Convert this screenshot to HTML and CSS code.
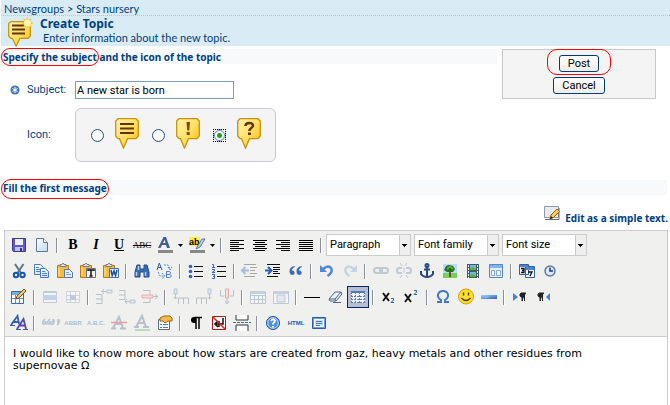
FILE: index.html
```html
<!DOCTYPE html>
<html lang="en">
<head>
<meta charset="utf-8">
<title>Create Topic</title>
<link rel="stylesheet" href="styles.css">
</head>
<body>
<svg class="defs" aria-hidden="true">
  <defs>
    <linearGradient id="gold" x1="0" y1="0" x2="1" y2="1"><stop offset="0" stop-color="#fff3b8"/><stop offset=".5" stop-color="#ffe066"/><stop offset="1" stop-color="#f9b90c"/></linearGradient>
    <linearGradient id="blue" x1="0" y1="0" x2="1" y2="1"><stop offset="0" stop-color="#a9d0f8"/><stop offset="1" stop-color="#2c5fc4"/></linearGradient>
    <linearGradient id="paper" x1="0" y1="0" x2="1" y2="1"><stop offset="0" stop-color="#fff"/><stop offset="1" stop-color="#c4d8f2"/></linearGradient>
    <symbol id="bubble" viewBox="0 0 24 31" preserveAspectRatio="none"><path d="M3 .7h18l2.300 2.300v15l-2.300 2.700h-8.500l-4 9.300-4-9.300H3L.7 18V3z" fill="url(#gold)" stroke="#c89208" stroke-width="1.300"/></symbol>
    <symbol id="clip" viewBox="0 0 20 20"><path d="M2.500 4.500h11v12h-11z" fill="#f5bd45" stroke="#bd7918"/><path d="M5 5.500V3.500h2l1-1.500 1 1.500h2v2z" fill="#e9e9f0" stroke="#79798b"/><path d="M4 7v8" stroke="#ffe49b"/></symbol>
  </defs>
</svg>

<header class="header">
  <nav class="crumbs"><a href="#">Newsgroups</a> &gt; <a href="#">Stars nursery</a></nav>
  <div class="heading">
    <svg class="topic-icon" viewBox="0 0 27 31"><use href="#bubble" x="1" y="5" width="23" height="26"/><path d="M5 9.500h13M5 13.500h13M5 17.500h13" stroke="#633600" stroke-width="2"/><path d="M20.500 1l1.300 2.500 3-1-1 3 2.700 1.500-2.700 1.500 1 3-3-1-1.300 2.500-1.300-2.500-3 1 1-3L14.500 7l2.700-1.500-1-3 3 1z" fill="#f0c64c"/><circle cx="20.500" cy="7" r="3.500" fill="#fff6b0"/></svg>
    <div><h1>Create Topic</h1><p>Enter information about the new topic.</p></div>
  </div>
</header>

<form class="page">
  <div class="top">
    <section class="details">
      <h2 class="band"><span class="mark">Specify the subject</span> and the icon of the topic</h2>
      <div class="field subject">
        <svg class="required" viewBox="0 0 10 10" aria-hidden="true"><circle cx="5" cy="5" r="4.600" fill="#4778b8"/><path d="M5 2v6M2.500 3.500l5 3M7.500 3.500l-5 3" stroke="#fff"/></svg>
        <label for="subject">Subject:</label>
        <input id="subject" type="text" value="A new star is born">
      </div>
      <div class="field">
        <span></span>
        <span id="icon-label">Icon:</span>
        <div class="choices" role="radiogroup" aria-labelledby="icon-label">
          <label><input type="radio" name="icon" aria-label="Message"><svg viewBox="0 0 24 31"><use href="#bubble" width="24" height="31"/><path d="M5 6h14M5 10.500h14M5 15h14" stroke="#633600" stroke-width="2"/></svg></label>
          <label><input type="radio" name="icon" aria-label="Important"><svg viewBox="0 0 24 31"><use href="#bubble" width="24" height="31"/><path d="M10.500 4h3.500l-.7 8.500h-2.100zM10.700 14h3v3h-3z" fill="#7d4e00"/></svg></label>
          <label><input type="radio" name="icon" aria-label="Question" checked><svg viewBox="0 0 24 31"><use href="#bubble" width="24" height="31"/><path d="M8.500 8c0-4 7.500-4 7.500-.5 0 2.500-3.700 2.500-3.700 5.500" fill="none" stroke="#633600" stroke-width="2.500"/><path d="M11 14.500h3v2.500h-3z" fill="#633600"/></svg></label>
        </div>
      </div>
    </section>
    <div class="actions">
      <span class="mark mark-button"><button type="button" class="push">Post</button></span>
      <button type="button" class="push">Cancel</button>
    </div>
  </div>

  <h2 class="band"><span class="mark mark-tall">Fill the first message</span></h2>

  <div class="switch"><a href="#"><svg viewBox="0 0 16 16"><path d="M.5 1.500h14v11H.5z" fill="#e5ebf1" stroke="#8c99a8"/><path d="M1 14.500h14V3" fill="none" stroke="#606b78"/><path d="M6 14l1-4 6-6 2.500 2.500-6 6z" fill="#ffcb4d" stroke="#956113"/><path d="M6 14l1-3 2 2z" fill="#222"/></svg>Edit as a simple text.</a></div>

  <div class="editor">
    <div class="tools" role="toolbar">
      <div class="row">
        <button type="button" aria-label="Save"><svg viewBox="0 0 20 20"><path d="M3.500 3.500h13v13h-12l-1-1z" fill="#605ac5" stroke="#3d398e"/><path d="M6 4h8v6H6z" fill="#eef0ff"/><path d="M6 12h8v4H6z" fill="#bfc1ef"/><path d="M11 13h2v3h-2z" fill="#353181"/></svg></button>
        <button type="button" aria-label="New document"><svg viewBox="0 0 20 20"><path d="M4.500 3.500h7l4 4v9h-11z" fill="url(#paper)" stroke="#5d7899"/><path d="M11.500 3.500v4h4" fill="#fff" stroke="#5d7899"/></svg></button>
        <i class="sep"></i>
        <button type="button" class="glyph"><b>B</b></button>
        <button type="button" class="glyph"><b><em>I</em></b></button>
        <button type="button" class="glyph"><b><u>U</u></b></button>
        <button type="button" class="glyph strike"><s>ABC</s></button>
        <button type="button" class="split" aria-label="Text colour"><svg viewBox="0 0 20 20"><path d="M3 13L8.500 2h2.500l4 11h-3l-1-3H7l-1.500 3zM8 8h2.600L9.700 4.800z" fill="#405d99"/><path d="M3 15h15v3H3z" fill="#888"/></svg><svg class="arrow" viewBox="0 0 5 3"><path d="M0 0h5L2.500 3z"/></svg></button>
        <button type="button" class="split" aria-label="Highlight"><svg viewBox="0 0 20 20"><path d="M2 2h11v9H2z" fill="#fff04d"/><text x="2" y="10" class="svg-ab">ab</text><path d="M10 12l5-8 3 0-5 8-4 2z" fill="#b9d2ee" stroke="#56769e"/><path d="M3 15h15v3H3z" fill="#888"/></svg><svg class="arrow" viewBox="0 0 5 3"><path d="M0 0h5L2.500 3z"/></svg></button>
        <i class="sep"></i>
        <button type="button" aria-label="Align left"><svg viewBox="0 0 20 20"><path d="M3 5.500h14M3 7.500h9M3 9.500h14M3 11.500h9M3 13.500h14M3 15.500h9" stroke="#000"/></svg></button>
        <button type="button" aria-label="Align centre"><svg viewBox="0 0 20 20"><path d="M3 5.500h14M5 7.500h10M3 9.500h14M5 11.500h10M3 13.500h14M5 15.500h10" stroke="#000"/></svg></button>
        <button type="button" aria-label="Align right"><svg viewBox="0 0 20 20"><path d="M3 5.500h14M8 7.500h9M3 9.500h14M8 11.500h9M3 13.500h14M8 15.500h9" stroke="#000"/></svg></button>
        <button type="button" aria-label="Justify"><svg viewBox="0 0 20 20"><path d="M3 5.500h14M3 7.500h14M3 9.500h14M3 11.500h14M3 13.500h14M3 15.500h14" stroke="#000"/></svg></button>
        <i class="sep"></i>
        <span class="pick"><select aria-label="Format"><option>Paragraph</option></select></span>
        <span class="pick"><select aria-label="Font family"><option>Font family</option></select></span>
        <span class="pick"><select aria-label="Font size"><option>Font size</option></select></span>
      </div>

      <div class="row">
        <button type="button" aria-label="Cut"><svg viewBox="0 0 20 20"><path d="M6 3l6 9M14.500 3l-6 9" stroke="#5e7590" stroke-width="2"/><circle cx="7" cy="14" r="2.200" fill="none" stroke="#1554b0" stroke-width="2"/><circle cx="13.500" cy="14" r="2.200" fill="none" stroke="#1554b0" stroke-width="2"/></svg></button>
        <button type="button" aria-label="Copy"><svg viewBox="0 0 20 20"><g fill="url(#paper)" stroke="#4e77b5"><path d="M2.500 3.500h6l3 3v7h-9z"/><path d="M8.500 7.500h5l3 3v6h-8z"/></g><path d="M4 6.500h3M4 8.500h4M4 10.500h4M10 10.500h3M10 12.500h5M10 14.500h5" stroke="#4e82ca"/></svg></button>
        <button type="button" aria-label="Paste"><svg viewBox="0 0 20 20"><use href="#clip" width="20" height="20"/><path d="M9.500 8.500h5l3 3v5h-8z" fill="#e2edff" stroke="#58779c"/><path d="M11 11.500h3M11 13.500h5" stroke="#7fa1cf"/></svg></button>
        <button type="button" aria-label="Paste text"><svg viewBox="0 0 20 20"><use href="#clip" width="20" height="20"/><path d="M8.500 7.500h9v9h-9z" fill="#f1f1f1" stroke="#65707e"/><path d="M10 10v-1h6v1M13 9v6M11.500 15h3" stroke="#111" stroke-width="1.500" fill="none"/></svg></button>
        <button type="button" aria-label="Paste from Word"><svg viewBox="0 0 20 20"><use href="#clip" width="20" height="20"/><path d="M8.500 7.500h9v9h-9z" fill="#e4efff" stroke="#4870b4"/><path d="M10 9l1.200 5.500L13 10l1.500 4.500L16 9" stroke="#174d9c" stroke-width="1.500" fill="none"/></svg></button>
        <i class="sep"></i>
        <button type="button" aria-label="Find"><svg viewBox="0 0 20 20"><path d="M5 4h3v4h4V4h3l2 7v5h-5v-5H8v5H3v-5z" fill="#396eb5" stroke="#234a86"/><path d="M4.500 11v4M13.500 11v4M6.500 5v4" stroke="#a9cdf3" stroke-width="1.500"/></svg></button>
        <button type="button" aria-label="Replace"><svg viewBox="0 0 20 20"><path d="M2 9l2.300-7L7 9M3 6.500h3" fill="none" stroke="#365895"/><path d="M11.500 10.500v6h3q2 0 1.500-2-.4-1-2-1h-2.500m0-3h2.500q2 0 1.500 2-.3 1-1.500 1" fill="none" stroke="#557fd0"/><path d="M9 4h4l2 4M3 11l2 4h4M13 6l2 3 2-3M7 12l3 3-3 3" fill="none" stroke="#4b8ae0" stroke-dasharray="2 1"/></svg></button>
        <i class="sep"></i>
        <button type="button" aria-label="Bullets"><svg viewBox="0 0 20 20"><path d="M8 5.500h9M8 10.500h9M8 15.500h9" stroke="#111"/><g fill="#2e63bb"><circle cx="4.500" cy="5.500" r="1.800"/><circle cx="4.500" cy="10.500" r="1.800"/><circle cx="4.500" cy="15.500" r="1.800"/></g></svg></button>
        <button type="button" aria-label="Numbers"><svg viewBox="0 0 20 20"><path d="M8 5.500h9M8 10.500h9M8 15.500h9" stroke="#111"/><path d="M3 3.500h1.500V6M3 6.500h3M3 8.500h2.500v1.500L3 11.500h3M3 13.500h2.500v4H3M4 15.500h2" fill="none" stroke="#2e63bb"/></svg></button>
        <i class="sep"></i>
        <button type="button" class="off" aria-label="Outdent"><svg viewBox="0 0 20 20"><path d="M4 3.500h12M10 6.500h7M10 9.500h5M10 12.500h7M4 15.500h11" stroke="#222"/><path d="M9 9.500H2M5.500 6L2 9.500 5.500 13" fill="none" stroke="#2460bd" stroke-width="2"/></svg></button>
        <button type="button" aria-label="Indent"><svg viewBox="0 0 20 20"><path d="M4 3.500h13M10 6.500h7M10 8.500h7M10 10.500h5M10 12.500h7M4 15.500h11" stroke="#111"/><path d="M2 9.500h6M5 6l3.500 3.500L5 13" fill="none" stroke="#2460bd" stroke-width="2"/></svg></button>
        <button type="button" aria-label="Quote"><svg viewBox="0 0 20 20"><path d="M8.500 5Q3 6 3.500 11q.5 3 3 3 2.500-.3 2.200-2.500Q8.200 9 6 9.500 6 7 9 6zM15.500 5q-5.500 1-5 6 .5 3 3 3 2.500-.3 2.200-2.500Q15.200 9 13 9.500 13 7 16 6z" fill="#3e6cb5"/></svg></button>
        <i class="sep"></i>
        <button type="button" aria-label="Undo"><svg viewBox="0 0 20 20"><path d="M3 4v7h7z" fill="#5686d8"/><path d="M6 8Q12 3 14.500 8q1 4-4 7" fill="none" stroke="#5686d8" stroke-width="2.500"/></svg></button>
        <button type="button" class="off" aria-label="Redo"><svg viewBox="0 0 20 20"><path d="M17 4v7h-7z" fill="#7fa0ca"/><path d="M14 8Q8 3 5.500 8q-1 4 4 7" fill="none" stroke="#7fa0ca" stroke-width="2.500"/></svg></button>
        <i class="sep"></i>
        <button type="button" class="off" aria-label="Link"><svg viewBox="0 0 20 20"><g fill="none" stroke="#6580a5" stroke-width="2"><rect x="3" y="7" width="8" height="5" rx="2.500"/><rect x="9" y="7" width="8" height="5" rx="2.500"/></g></svg></button>
        <button type="button" class="off" aria-label="Unlink"><svg viewBox="0 0 20 20"><g fill="none" stroke="#6580a5" stroke-width="2"><path d="M8 7H5q-2 0-2 2.500T5 12h3M12 7h3q2 0 2 2.500T15 12h-3"/><path d="M6 2l2 3M13 2l-2 3M6 17l2-3M14 17l-2-3M10 7v5" stroke-width="1"/></g></svg></button>
        <button type="button" aria-label="Anchor"><svg viewBox="0 0 20 20"><g fill="none" stroke="#274b80" stroke-width="2"><circle cx="10" cy="4.500" r="1.500"/><path d="M10 6v10M7 8.500h6M4 10v3q2 3 6 3t6-3v-3"/></g></svg></button>
        <button type="button" aria-label="Image"><svg viewBox="0 0 20 20"><path d="M3 3h14v9H3z" fill="#b7dcff"/><path d="M3 12h14v5H3z" fill="#77cf59"/><path d="M9 10h2v6H9z" fill="#75501a"/><path d="M4 9l2-4 3-1 4 1 2 3-2 3H7z" fill="#217222"/><path d="M7 8l3-2 3 2" stroke="#62b33b" stroke-width="2"/></svg></button>
        <button type="button" aria-label="Media"><svg viewBox="0 0 20 20"><path d="M4 3h12v14H4z" fill="#445c68"/><path d="M7 4h6v5H7zM7 11h6v5H7z" fill="#65bde7"/><path d="M7 7l3-1 3 2v1H7zM7 14l3-1 3 2v1H7z" fill="#5eae40"/><path d="M5.500 4v13M14.500 4v13" stroke="#eee" stroke-dasharray="2 1"/></svg></button>
        <button type="button" aria-label="Layer"><svg viewBox="0 0 20 20"><path d="M3.500 3.500h13v13h-13z" fill="#e2efff" stroke="#5586c5"/><path d="M4 4h12v3H4z" fill="#80b4f2"/><path d="M5.500 9.500h3v5h-3zM10.500 9.500h4v5h-4z" fill="#fff" stroke="#80a9d8"/></svg></button>
        <i class="sep"></i>
        <button type="button" aria-label="Date"><svg viewBox="0 0 20 20"><path d="M2.500 3.500h9v10h-9zM8.500 5.500h9v11h-9z" fill="#edf5ff" stroke="#33639b"/><path d="M3 4h8v2H3zM9 6h8v3H9z" fill="#4985d2"/><path d="M4 7.500h3v2H5h2v2H4M11 11h4l-2 4" fill="none" stroke="#111" stroke-width="1.300"/></svg></button>
        <button type="button" aria-label="Time"><svg viewBox="0 0 20 20"><circle cx="10" cy="10" r="5" fill="#dce9fa" stroke="#5c7ba6" stroke-width="1.500"/><path d="M10 6.500V10h3" fill="none" stroke="#173a75" stroke-width="1.500"/></svg></button>
      </div>

      <div class="row">
        <button type="button" aria-label="Table"><svg viewBox="0 0 20 20"><path d="M2.500 4.500h12v12h-12z" fill="#f6fbff" stroke="#366fae"/><path d="M3 5h11v3H3z" fill="#77a9e2"/><path d="M3 11.500h11M6.500 8v8M10.500 8v8" stroke="#6493c7"/><path d="M7 12l1-3 7-7 2 2-7 7z" fill="#f3c76a" stroke="#774b22"/></svg></button>
        <i class="sep"></i>
        <button type="button" class="off" aria-label="Row properties"><svg viewBox="0 0 20 20"><path d="M3.500 4.500h13v11h-13z" fill="#fff" stroke="#7285a0"/><path d="M3 8h14v5H3z" fill="#799bd0"/><path d="M4 5.500h12" stroke="#7285a0"/></svg></button>
        <button type="button" class="off" aria-label="Cell properties"><svg viewBox="0 0 20 20"><path d="M3.500 4.500h13v11h-13zM3 8.500h14M3 12.500h14M7.500 5v11M12.500 5v11" fill="#fff" stroke="#93a4bb"/><path d="M7 8h6v5H7z" fill="#5c85c5"/></svg></button>
        <i class="sep"></i>
        <button type="button" class="off" aria-label="Row before"><svg viewBox="0 0 20 20"><path d="M2 7.500h6v9H2M2 12h6M8 4.500h5M10 2L8 4.500 10 7" fill="none" stroke="#586a83"/><path d="M13 3h5v3h-5z" fill="#c4d8f2" stroke="#5b7ba6"/></svg></button>
        <button type="button" class="off" aria-label="Row after"><svg viewBox="0 0 20 20"><path d="M2 3.500h6v9H2M2 8h6M8 14.500h5M10 12l-2 2.500 2 2.500" fill="none" stroke="#586a83"/><path d="M13 13h5v3h-5z" fill="#c4d8f2" stroke="#5b7ba6"/></svg></button>
        <button type="button" class="off" aria-label="Delete row"><svg viewBox="0 0 20 20"><path d="M3 3.500h7v4M3 15.500h7v-4M12 9.500h6M15 7l3 2.500-3 2.500" fill="none" stroke="#586a83"/><path d="M2 8h11v3H2z" fill="#ffb6ad" stroke="#d73831"/></svg></button>
        <i class="sep"></i>
        <button type="button" class="off" aria-label="Column before"><svg viewBox="0 0 20 20"><path d="M3 2h3v5H3z" fill="#c4d8f2" stroke="#5b7ba6"/><path d="M4.500 7v5M2.500 10l2 2 2-2M7.500 17v-6h10v6M12.500 11v6" fill="none" stroke="#586a83"/></svg></button>
        <button type="button" class="off" aria-label="Column after"><svg viewBox="0 0 20 20"><path d="M14 2h3v5h-3z" fill="#c4d8f2" stroke="#5b7ba6"/><path d="M15.500 7v5M13.500 10l2 2 2-2M2.500 17v-6h10v6M7.500 11v6" fill="none" stroke="#586a83"/></svg></button>
        <button type="button" class="off" aria-label="Delete column"><svg viewBox="0 0 20 20"><path d="M3.500 3v6h4M16.500 3v6h-4M10 11v6M8 14l2 3 2-3" fill="none" stroke="#586a83"/><path d="M8.500 2h3v9h-3z" fill="#ffb6ad" stroke="#d73831"/></svg></button>
        <i class="sep"></i>
        <button type="button" class="off" aria-label="Split cells"><svg viewBox="0 0 20 20"><path d="M2.500 4.500h15v12h-15zM2 8.500h15M2 12.500h15M6.500 8v9M10.500 8v9M14.500 8v9" fill="#fff" stroke="#617da2"/><path d="M3 4h14v3H3z" fill="#7897c5"/></svg></button>
        <button type="button" class="off" aria-label="Merge cells"><svg viewBox="0 0 20 20"><path d="M2.500 4.500h15v12h-15z" fill="#fff" stroke="#617da2"/><path d="M3 4h14v3H3z" fill="#7897c5"/><path d="M6 8h8v7H6z" fill="#c8daf2" stroke="#617da2"/></svg></button>
        <i class="sep"></i>
        <button type="button" aria-label="Rule"><svg viewBox="0 0 20 20"><path d="M2 10.500h16" stroke="#000"/></svg></button>
        <button type="button" aria-label="Clean"><svg viewBox="0 0 20 20"><path d="M4 12l6-7h6l1 2-6 7H5z" fill="#eaf1fa" stroke="#4b6682"/><path d="M4 12h6l6-7M10 12l1 2M8 15.500h8" fill="none" stroke="#4b6682"/></svg></button>
        <button type="button" class="on" aria-label="Guides"><svg viewBox="0 0 20 20"><path d="M3 4h14v12H3z" fill="#eef3fb"/><path d="M3 5h14" stroke="#5279b1" stroke-width="2"/><path d="M3 9.500h14M3 12.500h14M3 15.500h14M3.500 5v11M7.500 5v11M11.500 5v11M16.500 5v11" fill="none" stroke="#5b7db0" stroke-dasharray="2 1"/></svg></button>
        <i class="sep"></i>
        <button type="button" aria-label="Subscript"><svg viewBox="0 0 20 20"><path d="M4 6l6 8M10 6l-6 8" stroke="#111" stroke-width="2"/><path d="M12 11.500h2.500v1.500L12 15.500h3" fill="none" stroke="#2b67b9"/></svg></button>
        <button type="button" aria-label="Superscript"><svg viewBox="0 0 20 20"><path d="M3 7l6 8M9 7l-6 8" stroke="#111" stroke-width="2"/><path d="M12 3.500h2.500V5L12 7.500h3" fill="none" stroke="#2b67b9"/></svg></button>
        <i class="sep"></i>
        <button type="button" aria-label="Special character"><svg viewBox="0 0 20 20"><path d="M4 15h4v-2Q4.500 11 5 7.500 6 4 10 4t5 3.500q.5 3.500-3 5.500v2h4" fill="none" stroke="#4076cc" stroke-width="2"/></svg></button>
        <button type="button" aria-label="Emoticon"><svg viewBox="0 0 20 20"><circle cx="10" cy="9.500" r="7.500" fill="#ffdf2e" stroke="#d89c00"/><path d="M7.500 5.500v3M12.500 5.500v3M5.500 11q4.500 5 9 0" fill="none" stroke="#593f00" stroke-width="1.500"/></svg></button>
        <button type="button" aria-label="Advanced rule"><svg viewBox="0 0 20 20"><path d="M2 8h16v4H2z" fill="url(#blue)"/><path d="M3 9h8l-3 2H3z" fill="#7fb4f3"/></svg></button>
        <i class="sep"></i>
        <button type="button" aria-label="Left to right"><svg viewBox="0 0 20 20"><path d="M3 6l5 4-5 4z" fill="#4780dc"/><path d="M16 6h-5q-2.500 2 0 4h1v4M12.500 6v8M14.500 6v8" fill="#222" stroke="#222"/></svg></button>
        <button type="button" aria-label="Right to left"><svg viewBox="0 0 20 20"><path d="M17 6l-4 4 4 4z" fill="#4780dc"/><path d="M11 6H6q-2.500 2 0 4h1v4M7.500 6v8M9.500 6v8" fill="#222" stroke="#222"/></svg></button>
      </div>

      <div class="row">
        <button type="button" aria-label="Style"><svg viewBox="0 0 20 20"><g fill="none" stroke="#345dac" stroke-width="1.800"><path d="M2 12L8.500 3l1.500 8M4.500 9H9"/><path d="M8 16L14.500 6 17 16M10.500 12.500h5" stroke="#5945a6"/></g><path d="M1 12.500h5M7 16.500h5M14 16.500h5" stroke="#345dac"/></svg></button>
        <i class="sep"></i>
        <button type="button" class="off" aria-label="Citation"><svg viewBox="0 0 20 20"><path d="M5 6q-3 2-2 5h3V9H4M10 6q-3 2-2 5h3V9H9M12 7h2v2h-2 2q0 2-2 3M17 7h2v2h-2 2q0 2-2 3" fill="none" stroke="#4f70a3" stroke-width="1.500"/></svg></button>
        <button type="button" class="off tiny">ABBR</button>
        <button type="button" class="off tiny">A.B.C.</button>
        <button type="button" class="off" aria-label="Deletion"><svg viewBox="0 0 20 20"><path d="M4 15L10 4l4 11M6 11h7M2 15.500h5M11 15.500h6" fill="none" stroke="#52688d" stroke-width="2"/><path d="M2 9.500h16" stroke="#e00" stroke-width="1.500"/></svg></button>
        <button type="button" class="off" aria-label="Insertion"><svg viewBox="0 0 20 20"><path d="M4 14L10 3l4 11M6 10h7M2 14h5M11 14h6" fill="none" stroke="#52688d" stroke-width="2"/><path d="M3 17h15" stroke="#16a925" stroke-width="1.500"/></svg></button>
        <button type="button" aria-label="Attributes"><svg viewBox="0 0 20 20"><path d="M3.500 6.500h11v10h-11z" fill="#fff" stroke="#5a7090"/><path d="M5 11.500h2M5 14.500h2M8 11.500h5M8 14.500h5" stroke="#4c7fc0"/><path d="M5 5l4-2h6l2 2v3h-4l-3 2-2-2H5z" fill="#f2bd4d" stroke="#98611b"/></svg></button>
        <i class="sep"></i>
        <button type="button" aria-label="Visual characters"><svg viewBox="0 0 20 20"><path d="M10 4H8Q5 4 5 7t3 3h2z"/><path d="M10 4v12M13 4v12M8 4.500h8" stroke="#000" stroke-width="1.500"/></svg></button>
        <button type="button" aria-label="Nonbreaking space"><svg viewBox="0 0 20 20"><path d="M3.500 3.500h13v13h-13z" fill="#fff" stroke="#ba1515"/><path d="M14 5v6H7M9 8l-3 3 3 3M10 8v6" fill="none" stroke="#111" stroke-width="1.500"/><path d="M4 4l12 12" stroke="#e42020" stroke-width="1.500"/></svg></button>
        <button type="button" aria-label="Page break"><svg viewBox="0 0 20 20"><path d="M4 2v5h12V2M4 18v-6h12v6" fill="#fff" stroke="#333"/><path d="M1 9.500h18" stroke="#3477bd" stroke-dasharray="3 1"/></svg></button>
        <i class="sep"></i>
        <button type="button" aria-label="Help"><svg viewBox="0 0 20 20"><circle cx="10" cy="10" r="6.500" fill="#4f8ddd" stroke="#1e539f"/><circle cx="10" cy="10" r="5.300" fill="none" stroke="#c4ddfa"/><path d="M8 8q2-3 4-.5 0 1.500-2 3v1M10 13v1.500" fill="none" stroke="#fff" stroke-width="1.800"/></svg></button>
        <button type="button" class="tiny">HTML</button>
        <button type="button" aria-label="Full screen"><svg viewBox="0 0 20 20"><path d="M3.500 4.500h13v11h-13z" fill="#6e9fe1" stroke="#2b5da7"/><path d="M5.500 6.500h9v7h-9z" fill="#c9dffc" stroke="#fff"/><path d="M7 8.500h6M7 10.500h6M7 12.500h4" stroke="#4a7bc0"/></svg></button>
      </div>
    </div>
    <div class="message" contenteditable="true" role="textbox" aria-label="Message">I would like to know more about how stars are created from gaz, heavy metals and other residues from supernovae Ω</div>
  </div>
</form>
</body>
</html>
```

FILE: styles.css
```css
* { box-sizing: border-box; }

body {
  margin: 0;
  min-height: 100vh;
  display: flex;
  flex-direction: column;
  background: #fff;
  color: #003f7d;
  font: 11px/14px Roboto, sans-serif;
}

h1, h2, p { margin: 0; font-size: inherit; }
a { color: inherit; text-decoration: none; }
button, input, select { font: inherit; margin: 0; }
.defs { position: absolute; width: 0; height: 0; }

.header {
  height: 46px;
  margin-left: 1px;
  background: #d9ecf6;
  font-family: Lato, sans-serif;
}
.crumbs { height: 16px; padding: 2px 0 0 3px; border-bottom: 1px dotted #b9c4cc; }
.heading { display: flex; gap: 6px; padding-left: 6px; }
.heading h1 { font: bold 12px/15px "Noto Sans", sans-serif; }
.heading p { padding-left: 3px; }
.topic-icon { width: 27px; height: 31px; }

.page { display: flex; flex-direction: column; flex: 1; }
.top { display: flex; gap: 5px; height: 134px; padding: 3px 14px 0 0; }
.details { flex: 1; }
.band {
  height: 15px;
  margin-right: 3px;
  padding-left: 3px;
  background: #f7f9fb;
  font: bold 10px/16px "Noto Sans", sans-serif;
}
.top .band { margin-right: 0; }

/* red outlines around the highlighted parts */
.mark { position: relative; }
.mark::after {
  content: "";
  position: absolute;
  inset: -2px;
  border: 1px solid #f00;
  border-radius: 10px;
  pointer-events: none;
}
.mark-tall::after { inset: -2px -2px -4px; }
.mark-button::after { inset: -6px -12px -3px; }

.field {
  display: grid;
  grid-template-columns: 17px 48px 1fr;
  align-items: center;
  padding-left: 10px;
}
.subject { height: 18px; margin: 17px 0 9px; }
.required { width: 10px; height: 10px; }
.subject input {
  width: 159px;
  height: 18px;
  padding: 0 1px;
  border: 1px solid #7f9db9;
  background: #fff;
  color: #000;
}
.choices {
  display: flex;
  align-items: center;
  gap: 13px;
  width: 201px;
  height: 54px;
  padding: 0 14px 0 15px;
  border: 1px solid #c8cbd0;
  border-radius: 6px;
  background: #f4f4f4;
}
.choices label { flex: none; display: flex; align-items: center; gap: 11px; }
.choices svg { width: 24px; height: 31px; margin-bottom: 3px; }
.choices input {
  appearance: none;
  width: 13px;
  height: 13px;
  margin: 0;
  border: 1px solid #1d5281;
  border-radius: 50%;
  background: #fafaf7;
}
.choices input:checked {
  border: 1px dotted #000;
  border-radius: 0;
  background: radial-gradient(circle, #21a121 0 2px, #fafaf7 3px 4px, #7f9db9 5px, transparent 6px);
}

.actions {
  display: flex;
  flex-direction: column;
  align-items: center;
  gap: 5px;
  width: 154px;
  height: 50px;
  padding-top: 5px;
  border: 1px solid #c8c8c8;
  background: #f4f4f4;
}
.mark-button { display: flex; }
.push {
  height: 17px;
  padding: 0 8px;
  border: 1px solid #003c74;
  border-radius: 3px;
  background: linear-gradient(#fff, #eeede6);
  color: #000;
  line-height: 15px;
}

.switch {
  display: flex;
  justify-content: flex-end;
  height: 35px;
  padding: 10px 2px 0 0;
  font: bold 10px/26px "Noto Sans", sans-serif;
}
.switch a { display: flex; gap: 5px; }
.switch svg { width: 16px; height: 16px; }

.editor {
  display: flex;
  flex-direction: column;
  flex: 1;
  margin: 0 2px 0 4px;
  border: 1px solid #ccc;
  border-bottom: 0;
}
.tools {
  display: flex;
  flex-direction: column;
  gap: 4px;
  padding: 3px 3px 2px;
  border-bottom: 1px solid #ccc;
  background: #f0f0ee;
}
.row { display: flex; gap: 1px; height: 22px; }
.row button {
  flex: none;
  display: flex;
  align-items: center;
  justify-content: center;
  width: 22px;
  height: 22px;
  padding: 0;
  border: 1px solid transparent;
  background: none;
  color: #000;
}
.row button svg { flex: none; width: 20px; height: 20px; }
.row button.split { width: 31px; justify-content: flex-start; }
.row button .arrow { width: 5px; height: 3px; margin-left: 3px; }
.row button.off { opacity: .35; }
.row button.on { border-color: #0a246a; background: #b6bdd2; }
.row .glyph { font: 14px/20px "Liberation Serif", serif; }
.row .strike { font-size: 9px; }
.row .tiny { color: #1959ad; font: bold 6px/20px "Liberation Sans", sans-serif; }
.svg-ab { font: bold 9px "Liberation Sans", sans-serif; }
.sep {
  width: 2px;
  height: 15px;
  margin: 4px 3px 0 2px;
  border-left: 1px solid #8b8e9d;
  border-right: 1px solid #fff;
}

.pick {
  position: relative;
  width: 85px;
  height: 22px;
  margin-right: 2px;
  border: 1px solid #ccc;
  background: #fff;
}
.pick::after {
  content: "";
  position: absolute;
  inset: 0 0 0 auto;
  width: 10px;
  border-left: 1px solid #ccc;
  background: linear-gradient(#000, #000) 2px 9px / 5px 1px no-repeat,
    linear-gradient(#000, #000) 3px 10px / 3px 1px no-repeat,
    linear-gradient(#000, #000) 4px 11px / 1px 1px no-repeat, #eee;
  pointer-events: none;
}
.pick select {
  appearance: none;
  width: 100%;
  height: 20px;
  padding: 0 3px;
  border: 0;
  background: none;
  color: #000;
}

.message {
  flex: 1;
  padding: 11px 40px 8px 8px;
  color: #000;
  font: 11px/12px "DejaVu Sans", sans-serif;
}
```
